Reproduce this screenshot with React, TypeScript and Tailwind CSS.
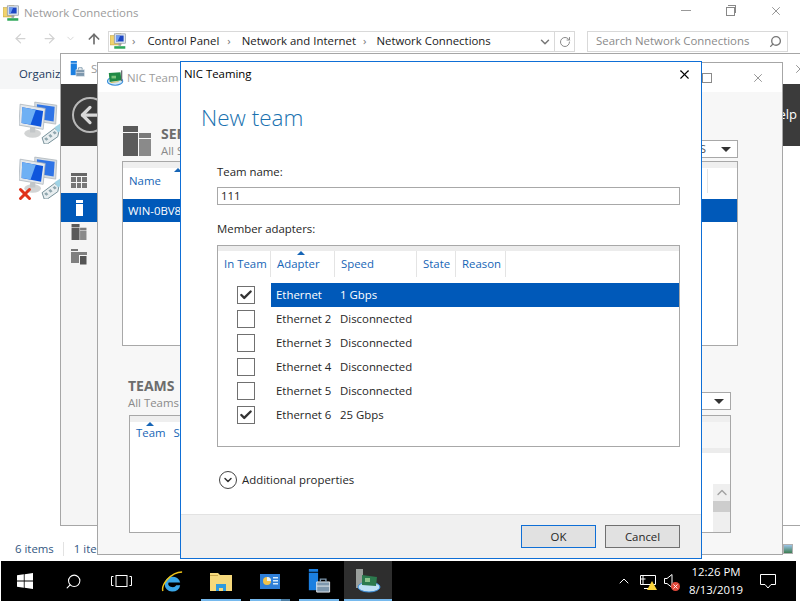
import { ArrowLeft, ArrowRight, ArrowUp, Check, ChevronDown, ChevronUp, RotateCw, Search, X } from "lucide-react";

const FONT = "font-['Open_Sans','Noto_Sans',sans-serif]";

const ADAPTERS = [
  { name: "Ethernet", speed: "1 Gbps", checked: true, selected: true },
  { name: "Ethernet 2", speed: "Disconnected", checked: false, selected: false },
  { name: "Ethernet 3", speed: "Disconnected", checked: false, selected: false },
  { name: "Ethernet 4", speed: "Disconnected", checked: false, selected: false },
  { name: "Ethernet 5", speed: "Disconnected", checked: false, selected: false },
  { name: "Ethernet 6", speed: "25 Gbps", checked: true, selected: false },
];

const COLUMNS = [
  { label: "In Team", width: "w-[53px]", pad: "pl-[6px]" },
  { label: "Adapter", width: "w-[64px]", pad: "pl-[6px]", sorted: true },
  { label: "Speed", width: "w-[82px]", pad: "pl-[6px]" },
  { label: "State", width: "w-[39px]", pad: "pl-[6px]" },
  { label: "Reason", width: "w-[50px]", pad: "pl-[6px]" },
];

function NetFolderIcon({ className }: { className: string }) {
  return (
    <svg viewBox="0 0 20 20" className={className}>
      <path d="M0 3h6l1-2h6v13H0z" fill="#f1d36f" stroke="#b89a3c" strokeWidth="0.6" />
      <rect x="5" y="1" width="13" height="11" fill="#dfe6ee" stroke="#7f8894" strokeWidth="0.7" />
      <rect x="7" y="3" width="9" height="7" fill="#1c46c4" />
      <path d="M7 3h5l-3 7H7z" fill="#6f9cf0" />
      <rect x="10" y="12" width="3" height="3" fill="#9aa0a8" />
      <rect x="5" y="15.5" width="13" height="3" fill="#2fa85a" />
    </svg>
  );
}

function ComputersIcon({ className }: { className: string }) {
  return (
    <svg viewBox="0 0 40 42" className={className}>
      <path d="M15 2l21 3-1 18-20-3z" fill="#d7dde2" stroke="#aab2b8" strokeWidth="0.7" />
      <path d="M17 4l17 2.500-1 14-16-2.500z" fill="#2f74e6" />
      <path d="M1 4l24 4-2 20L0 24z" fill="#e4e8ec" stroke="#a7b0b7" strokeWidth="0.7" />
      <path d="M3 7l20 3.500-2 15L2.500 22z" fill="#0f56dc" />
      <path d="M3 7l13 2.300-5 14L2.500 22z" fill="#6fb0f4" />
      <ellipse cx="13" cy="32" rx="8" ry="4" fill="#d2d4d4" />
      <rect x="10.500" y="26" width="5" height="5" fill="#c2c6c8" />
      <path d="M22 36l12-9 4 3-1 5-10 7h-3z" fill="#e8eef0" stroke="#6f8a94" strokeWidth="0.9" />
      <path d="M24 37l2-1.500 2 2-2 1.500zM28 34l2-1.500 2 2-2 1.500zM32 31l2-1.500 2 2-2 1.500z" fill="#8fa6ae" />
      <path d="M34 26l6-4v7l-3 2z" fill="#9fd2e4" />
    </svg>
  );
}

function ServerManagerIcon({ className }: { className: string }) {
  return (
    <svg viewBox="0 0 24 26" className={className}>
      <rect x="1" y="0" width="10" height="3" fill="#1b7fe0" />
      <rect x="1" y="4" width="10" height="19" fill="#1b7fe0" />
      <path d="M9.500 14h14v11h-14z" fill="#7d97ad" stroke="#e9eef2" strokeWidth="1" />
      <path d="M13.500 14v-3h6v3" fill="none" stroke="#7d97ad" strokeWidth="1.500" />
      <rect x="9.500" y="18" width="14" height="1" fill="#e9eef2" />
    </svg>
  );
}

function NicIcon({ className }: { className: string }) {
  return (
    <svg viewBox="0 0 20 17" className={className}>
      <ellipse cx="9" cy="12" rx="8.500" ry="4.500" fill="#cfe6f7" stroke="#3b8fdc" strokeWidth="1.200" />
      <path d="M2 3l13-1 1 9-13 2z" fill="#1f8a45" />
      <path d="M5 6h5v3H5z" fill="#7cc47c" />
      <rect x="15.500" y="0" width="1.500" height="12" fill="#6a6f74" />
      <path d="M4 13l9-1v1l-9 1z" fill="#d8b84a" />
    </svg>
  );
}

function ServersGlyph({ className }: { className: string }) {
  return (
    <svg viewBox="0 0 28 30" className={className}>
      <rect x="0" y="0" width="15" height="6" fill="#5a5a5a" />
      <rect x="0" y="7" width="15" height="23" fill="#5a5a5a" />
      <rect x="16" y="7" width="12" height="5" fill="#7a7a7a" />
      <rect x="16" y="13" width="12" height="17" fill="#8a8a8a" />
    </svg>
  );
}

function GroupsGlyph({ className }: { className: string }) {
  return (
    <svg viewBox="0 0 16 16" className={className}>
      <rect x="0" y="0" width="7" height="2" fill="#777" />
      <path d="M0 3h16v11H0z" fill="#808080" />
      <rect x="8.500" y="6.500" width="7.500" height="9.500" fill="#555" stroke="#f5f5f5" strokeWidth="1" />
    </svg>
  );
}

function DashboardGlyph({ className }: { className: string }) {
  return (
    <svg viewBox="0 0 16 15" className={className}>
      <rect width="16" height="3" fill="#666" />
      <rect y="4" width="5" height="5" fill="#777" />
      <rect x="6" y="4" width="4" height="5" fill="#777" />
      <rect x="11" y="4" width="5" height="5" fill="#777" />
      <rect y="10" width="5" height="5" fill="#777" />
      <rect x="6" y="10" width="4" height="5" fill="#777" />
      <rect x="11" y="10" width="5" height="5" fill="#777" />
    </svg>
  );
}

function SectionHeader({ title, sub, tasks }: { title: string; sub: string; tasks?: string }) {
  return (
    <div className="flex items-end justify-between">
      <div>
        <div className="text-[14px] leading-[18px] font-bold text-[#6d6d6d]">{title}</div>
        <div className="text-[11.4px] leading-[16px] text-[#8a8a8a]">{sub}</div>
      </div>
      <div className="mb-[1px] flex h-[18px] w-[80px] items-center justify-end border border-[#a8a8a8] bg-white pr-[6px] text-[11.4px] text-[#555]">
        {tasks && <span className="mr-[15px]">{tasks}</span>}
        <span className="h-0 w-0 border-x-[5px] border-t-[5px] border-x-transparent border-t-[#333]" />
      </div>
    </div>
  );
}

function Explorer() {
  return (
    <div className="flex h-full flex-col bg-white">
      <div className="flex h-[26px] items-center pl-[3px] pr-[17px]">
        <NetFolderIcon className="h-[17px] w-[17px]" />
        <span className="ml-[4px] flex-1 text-[11.4px] text-[#9b9b9b]">Network Connections</span>
        <span className="mb-[5px] mr-[35px] h-[1px] w-[10px] bg-[#999]" />
        <span className="relative mb-[4px] mr-[34px] h-[9px] w-[9px] border border-[#888]">
          <span className="absolute -right-[2px] -top-[3px] h-[8px] w-[8px] border-r border-t border-[#888]" />
        </span>
        <X className="mb-[4px] h-[14px] w-[14px] text-[#888]" strokeWidth={1.500} />
      </div>
      <div className="flex h-[27px] items-start pt-[5px]">
        <ArrowLeft className="ml-[13px] h-[15px] w-[15px] text-[#d2d2d2]" strokeWidth={2} />
        <ArrowRight className="ml-[14px] h-[15px] w-[15px] text-[#d2d2d2]" strokeWidth={2} />
        <ChevronDown className="ml-[8px] mt-[2px] h-[11px] w-[11px] text-[#d2d2d2]" strokeWidth={2} />
        <ArrowUp className="ml-[10px] h-[16px] w-[16px] text-[#6e6e6e]" strokeWidth={2.500} />
        <div className="ml-[6px] flex h-[21px] w-[467px] items-center border border-[#d9d9d9] pb-[2px] text-[11.4px] text-[#1a1a1a]">
          <NetFolderIcon className="ml-[1px] mt-[2px] h-[17px] w-[17px]" />
          <span className="ml-[5px] text-[#777]">›</span>
          <span className="ml-[12px]">Control Panel</span>
          <span className="ml-[8px] text-[#777]">›</span>
          <span className="ml-[11px]">Network and Internet</span>
          <span className="ml-[7px] text-[#777]">›</span>
          <span className="ml-[10px]">Network Connections</span>
          <ChevronDown className="ml-auto mr-[2px] mt-[2px] h-[14px] w-[14px] text-[#777]" strokeWidth={2.500} />
          <span className="-mb-[2px] flex h-[19px] w-[20px] items-center justify-center border-l border-[#d9d9d9]">
            <RotateCw className="h-[12px] w-[12px] text-[#8a8a8a]" strokeWidth={2} />
          </span>
        </div>
        <div className="ml-[12px] flex h-[21px] w-[201px] items-center justify-between border border-[#d9d9d9] pb-[1px] pl-[8px] pr-[5px] text-[11.4px] text-[#8a8a8a]">
          <span>Search Network Connections</span>
          <Search className="h-[13px] w-[13px] -scale-x-100 text-[#777]" strokeWidth={2.500} />
        </div>
      </div>
      <div className="mt-[6px] flex h-[30px] items-center bg-[#f5f6f7] pl-[19px] text-[11.4px] text-[#1c3a5e]">Organiz</div>
      <div className="-ml-[1px] flex-1 pl-[20px] pt-[11px]">
        <ComputersIcon className="h-[44px] w-[42px]" />
        <div className="relative mt-[11px] w-[42px]">
          <ComputersIcon className="h-[44px] w-[42px]" />
          <X className="absolute -left-[3px] top-[30px] h-[18px] w-[18px] text-[#e0331a]" strokeWidth={4} />
        </div>
      </div>
      <div className="flex h-[24px] items-center justify-between text-[11.4px] text-[#33577f]">
        <div className="flex items-center pl-[15px]">
          <span>6 items</span>
          <span className="ml-[9px] h-[14px] w-[1px] bg-[#e2e2e2]" />
          <span className="ml-[10px]">1 ite</span>
        </div>
        <div className="mr-[7px] h-[10px] w-[10px] border border-[#b0b0b0] bg-gradient-to-b from-[#9cc4e8] to-[#3d7d52]" />
      </div>
    </div>
  );
}

function ServerManager() {
  return (
    <div className="absolute left-[60px] top-[53px] flex h-[473px] w-[760px] flex-col border border-[#a6a6a6] bg-white">
      <div className="flex h-[30px] items-center pl-[9px]">
        <ServerManagerIcon className="h-[16px] w-[15px]" />
        <span className="ml-[6px] text-[11.4px] text-[#9b9b9b]">S</span>
        <X className="ml-auto mr-[12px] h-[14px] w-[14px] text-[#888]" strokeWidth={1.500} />
      </div>
      <div className="flex h-[62px] items-center justify-between bg-[#3b3b3b] pl-[11px] pr-[22px] text-white">
        <div className="flex h-[36px] w-[36px] items-center justify-center rounded-full border-2 border-[#b8b8b8]">
          <ArrowLeft className="h-[26px] w-[26px] text-[#d8d8d8]" strokeWidth={3} />
        </div>
        <span className="text-[13px]">elp</span>
      </div>
      <div className="flex w-[36px] flex-1 flex-col items-center bg-[#f5f5f5] pt-[27px]">
        <DashboardGlyph className="h-[15px] w-[16px]" />
        <div className="mt-[5px] flex h-[29px] w-full items-center justify-center bg-[#0059b9]">
          <span className="flex flex-col gap-[1px]">
            <span className="h-[3px] w-[7px] bg-white" />
            <span className="h-[12px] w-[7px] bg-white" />
          </span>
        </div>
        <ServersGlyph className="mt-[2px] h-[16px] w-[16px]" />
        <GroupsGlyph className="mt-[9px] h-[16px] w-[16px]" />
      </div>
    </div>
  );
}

function NicWindow() {
  return (
    <div className="absolute left-[97px] top-[62px] flex h-[493px] w-[686px] flex-col border border-[#a6a6a6] bg-[#f7f7f7]">
      <div className="flex h-[29px] items-center bg-white pl-[9px]">
        <NicIcon className="h-[18px] w-[18px]" />
        <span className="ml-[2px] flex-1 text-[11.4px] text-[#9b9b9b]">NIC Team</span>
        <span className="mr-[39px] h-[10px] w-[10px] border border-[#8a8a8a]" />
        <X className="mr-[17px] h-[14px] w-[14px] text-[#888]" strokeWidth={1.500} />
      </div>
      <div className="flex-1 pl-[24px] pr-[44px] pt-[33px]">
        <div className="flex items-end">
          <ServersGlyph className="mb-[3px] ml-[1px] h-[30px] w-[28px]" />
          <div className="ml-[10px] flex-1">
            <SectionHeader title="SER" sub="All S" tasks="S" />
          </div>
        </div>
        <div className="mt-[2px] h-[185px] border border-[#a8a8a8] bg-white">
          <div className="h-[6px] bg-[#efefef]" />
          <div className="relative flex h-[31px] items-center justify-between pb-[6px] pl-[6px] text-[11.4px] text-[#1665b6]">
            <span>Name</span>
            <span className="absolute left-[51px] top-0 h-0 w-0 border-x-[4px] border-b-[4px] border-x-transparent border-b-[#1665b6]" />
            <span className="mr-[29px] h-[24px] w-[1px] bg-[#e4e4e4]" />
          </div>
          <div className="flex h-[23px] items-center bg-[#0059b9] pl-[5px] pt-[1px] text-[11.4px] text-white">WIN-0BV8</div>
        </div>
        <div className="ml-[6px] mr-[7px] mt-[31px]">
          <SectionHeader title="TEAMS" sub="All Teams" />
        </div>
        <div className="ml-[7px] mr-[7px] mt-[4px] flex h-[118px] flex-col border border-[#a8a8a8] bg-white">
          <div className="h-[6px] bg-[#efefef]" />
          <div className="relative flex h-[31px] items-start pl-[6px] pt-[2px] text-[11.4px] text-[#1665b6]">
            <span>Team</span>
            <span className="absolute left-[16px] top-0 h-0 w-0 border-x-[4px] border-b-[4px] border-x-transparent border-b-[#1665b6]" />
            <span className="ml-[8px]">S</span>
            <span className="ml-auto -mt-[2px] h-[31px] w-[60px] border-b-[5px] border-[#ececec] bg-[#f7f7f7]" />
          </div>
          <div className="flex flex-1 justify-end">
            <div className="mt-[31px] flex w-[17px] flex-col items-center bg-[#efefef]">
              <ChevronUp className="h-[17px] w-[16px] text-[#a0a0a0]" strokeWidth={2} />
              <div className="h-[11px] w-full bg-[#cdcdcd]" />
            </div>
          </div>
        </div>
      </div>
    </div>
  );
}

function TeamDialog() {
  return (
    <div className="absolute left-[180px] top-[61px] flex h-[498px] w-[522px] flex-col border border-[#0f6fd6] bg-white">
      <div className="flex h-[24px] items-center justify-between pl-[3px] pr-[9px] text-[11.4px] text-black">
        <span>NIC Teaming</span>
        <X className="h-[15px] w-[15px] text-black" strokeWidth={1.700} />
      </div>
      <div className="flex flex-1 flex-col pl-[36px] pr-[21px]">
        <h1 className="-ml-[16px] mt-[16px] text-[22.5px] leading-[32px] font-light text-[#1a72b0]">New team</h1>
        <label className="mt-[30px] block text-[11.4px] leading-[16px] text-[#262626]">Team name:</label>
        <div className="mt-[7px] flex h-[18px] items-center border border-[#a8a8a8] pl-[3px] text-[11.4px] text-[#262626]">111</div>
        <label className="mt-[16px] block text-[11.4px] leading-[16px] text-[#262626]">Member adapters:</label>
        <div className="mt-[8px] h-[202px] border border-[#a8a8a8]">
          <div className="h-[5px] bg-[#ececec]" />
          <div className="flex h-[26px] text-[11.4px] text-[#1665b6]">
            {COLUMNS.map((c) => (
              <div key={c.label} className={`relative flex items-center border-r border-[#e4e4e4] ${c.width} ${c.pad}`}>
                {c.sorted && (
                  <span className="absolute left-[26px] top-0 h-0 w-0 border-x-[4px] border-b-[4px] border-x-transparent border-b-[#1665b6]" />
                )}
                {c.label}
              </div>
            ))}
          </div>
          <div className="mt-[6px]">
            {ADAPTERS.map((a) => (
              <div key={a.name} className="flex h-[24px] items-center text-[11.4px] text-[#262626]">
                <div className="flex w-[53px] justify-center pl-[2px]">
                  <span className="flex h-[18px] w-[18px] items-center justify-center border border-[#707070] bg-white">
                    {a.checked && <Check className="h-[14px] w-[14px] text-[#333]" strokeWidth={4} />}
                  </span>
                </div>
                <div className={`flex h-full flex-1 items-center pl-[5px] ${a.selected ? "bg-[#0059b9] text-white" : ""}`}>
                  <span className="w-[64px]">{a.name}</span>
                  <span>{a.speed}</span>
                </div>
              </div>
            ))}
          </div>
        </div>
        <div className="mt-[24px] flex items-center text-[11.4px] text-[#262626]">
          <span className="ml-[2px] flex h-[18px] w-[18px] items-center justify-center rounded-full border border-[#444]">
            <ChevronDown className="h-[12px] w-[12px] text-[#333]" strokeWidth={3} />
          </span>
          <span className="ml-[5px]">Additional properties</span>
        </div>
      </div>
      <div className="flex h-[44px] items-center justify-end gap-[9px] border-t border-[#e2e2e2] bg-[#f0f0f0] pr-[21px] text-[11.4px] text-[#262626]">
        <button className="h-[23px] w-[75px] border border-[#0f6fd6] bg-[#e1e1e1]">OK</button>
        <button className="h-[23px] w-[75px] border border-[#707070] bg-[#e1e1e1]">Cancel</button>
      </div>
    </div>
  );
}

function TaskSlot({ children, active, dim }: { children: React.ReactNode; active?: boolean; dim?: boolean }) {
  return (
    <div className={`relative flex h-full w-[48px] items-center justify-center ${active ? "bg-[#2e2e2e]" : ""}`}>
      {children}
      <span className={`absolute bottom-0 h-[2px] bg-[#76b9ed] ${active ? "inset-x-0" : "inset-x-[4px]"}`} />
      {dim && <span className="absolute bottom-0 right-[4px] h-[2px] w-[9px] bg-[#4c7fa6]" />}
    </div>
  );
}

function Taskbar() {
  return (
    <div className="ml-[1px] flex h-[40px] w-[795px] items-center bg-black text-white">
      <div className="flex h-full w-[48px] items-center justify-center">
        <svg viewBox="0 0 16 16" className="h-[16px] w-[16px]" fill="#fff">
          <path d="M0 2.300l6.800-1V7.600H0zM7.600 1.200L16 0v7.600H7.600zM0 8.400h6.800v6.300l-6.800-1zM7.600 8.400H16V16l-8.400-1.200z" />
        </svg>
      </div>
      <div className="flex h-full w-[48px] items-center justify-center">
        <Search className="h-[17px] w-[17px] -scale-x-100" strokeWidth={1.500} />
      </div>
      <div className="flex h-full w-[48px] items-center justify-center">
        <svg viewBox="0 0 21 12" className="h-[12px] w-[21px]" fill="none" stroke="#fff" strokeWidth="1">
          <rect x="5" y="0.500" width="11" height="11" />
          <path d="M2.500 1.500H.5v9h2M18.500 1.500h2v9h-2" />
        </svg>
      </div>
      <div className="ml-[3px] flex h-full items-center gap-[1px]">
        <div className="flex h-full w-[48px] items-center justify-center">
          <svg viewBox="0 0 24 24" className="h-[23px] w-[23px]">
            <path d="M4 15a8 7 0 0 1 16-2H8a4 3 0 0 0 8 3h4a8 7 0 0 1-16-1z" fill="#3aa7e8" />
            <path d="M2 22C0 16 10 2 22 2" fill="none" stroke="#f0c419" strokeWidth="1.500" />
          </svg>
        </div>
        <TaskSlot>
          <svg viewBox="0 0 22 19" className="h-[19px] w-[22px]">
            <path d="M0 1h8l2 2h12v16H0z" fill="#f6d97c" />
            <rect x="0" y="3" width="8" height="1" fill="#caa84a" />
            <path d="M6 12h10v7h-3v-3h-4v3H6z" fill="#2f9be0" />
          </svg>
        </TaskSlot>
        <TaskSlot dim>
          <svg viewBox="0 0 20 15" className="h-[15px] w-[20px]">
            <rect width="20" height="15" fill="#2f7fd8" />
            <circle cx="7" cy="7" r="4" fill="#f2c24a" />
            <path d="M7 7V3a4 4 0 0 1 4 4z" fill="#e9f3fb" />
            <path d="M13 3h5v1.500h-5zM13 6h5v1.500h-5zM13 9h5v1.500h-5z" fill="#d8ebfa" />
          </svg>
        </TaskSlot>
        <TaskSlot>
          <ServerManagerIcon className="h-[24px] w-[24px]" />
        </TaskSlot>
        <TaskSlot active>
          <svg viewBox="0 0 26 24" className="h-[24px] w-[26px]">
            <rect x="1" y="0" width="7" height="19" fill="#9a9f9c" />
            <ellipse cx="14" cy="18" rx="11" ry="5" fill="#bfe0f4" stroke="#3b8fdc" />
            <path d="M7 6l15 2-1 9-14-1z" fill="#2c7a4e" />
            <path d="M10 9h5v4h-5z" fill="#8cc28c" />
          </svg>
        </TaskSlot>
      </div>
      <div className="ml-auto flex h-full items-center">
        <ChevronUp className="h-[16px] w-[16px]" strokeWidth={1.500} />
        <div className="relative ml-[8px] h-[15px] w-[16px]">
          <svg viewBox="0 0 16 15" className="h-[15px] w-[16px]" fill="none" stroke="#fff" strokeWidth="1">
            <path d="M.5 1.500h15v9H.5zM3 1.500v9M.5 5h5M4 14.500h6" />
          </svg>
          <span className="absolute -bottom-[1px] -right-[1px] h-0 w-0 border-x-[5px] border-b-[9px] border-x-transparent border-b-[#fbd43a]" />
        </div>
        <div className="relative ml-[8px] h-[14px] w-[13px]">
          <svg viewBox="0 0 10 14" className="h-[14px] w-[10px]" fill="none" stroke="#fff" strokeWidth="1">
            <path d="M.5 4.500h2.500L8 .5v13L3 9.500H.5z" />
          </svg>
          <span className="absolute -bottom-[3px] -right-[3px] flex h-[9px] w-[9px] items-center justify-center rounded-full bg-[#e0483a]">
            <X className="h-[7px] w-[7px] text-white" strokeWidth={3} />
          </span>
        </div>
        <div className="w-[78px] text-center text-[11.4px] leading-[18px]">
          <div>12:26 PM</div>
          <div>8/13/2019</div>
        </div>
        <div className="flex w-[41px] justify-center pr-[15px]">
          <svg viewBox="0 0 16 15" className="h-[15px] w-[16px]" fill="none" stroke="#fff" strokeWidth="1">
            <path d="M.5.5h15v10H11l-3 3.500-3-3.500H.5z" />
          </svg>
        </div>
      </div>
    </div>
  );
}

export default function App() {
  return (
    <div className={`h-[605px] w-[800px] overflow-hidden bg-white ${FONT}`}>
      <div className="relative h-[561px] overflow-hidden">
        <Explorer />
        <ServerManager />
        <NicWindow />
        <TeamDialog />
      </div>
      <Taskbar />
    </div>
  );
}
